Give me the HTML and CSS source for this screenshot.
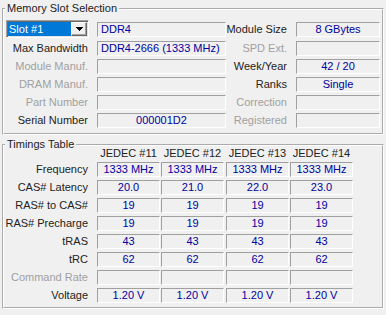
FILE: index.html
```html
<!DOCTYPE html>
<html>
<head>
    <meta charset="UTF-8">
    <title>SPD</title>
    <link rel="stylesheet" href="styles.css">
</head>
<body>
    <div class="window">
        <fieldset class="group slot">
            <legend>Memory Slot Selection</legend>
            <div class="slot-grid">
                <div class="combo">
                    <span class="combo-value">Slot #1</span>
                    <span class="combo-btn">
                        <svg width="7" height="4" viewBox="0 0 7 4"><path d="M0 0h7v1h-1v1h-1v1h-1v1h-1v-1h-1v-1h-1v-1h-1z" fill="#000"/></svg>
                    </span>
                </div>
                <div class="field">DDR4</div>
                <div class="label">Module Size</div>
                <div class="field center">8 GBytes</div>

                <div class="label">Max Bandwidth</div>
                <div class="field">DDR4-2666 (1333 MHz)</div>
                <div class="label off">SPD Ext.</div>
                <div class="field"></div>

                <div class="label off">Module Manuf.</div>
                <div class="field"></div>
                <div class="label">Week/Year</div>
                <div class="field center">42 / 20</div>

                <div class="label off">DRAM Manuf.</div>
                <div class="field"></div>
                <div class="label">Ranks</div>
                <div class="field center">Single</div>

                <div class="label off">Part Number</div>
                <div class="field"></div>
                <div class="label off">Correction</div>
                <div class="field"></div>

                <div class="label">Serial Number</div>
                <div class="field center">000001D2</div>
                <div class="label off">Registered</div>
                <div class="field"></div>
            </div>
        </fieldset>

        <fieldset class="group timings">
            <legend>Timings Table</legend>
            <div class="timing-grid">
                <div></div>
                <div class="head">JEDEC #11</div>
                <div class="head">JEDEC #12</div>
                <div class="head">JEDEC #13</div>
                <div class="head">JEDEC #14</div>

                <div class="label">Frequency</div>
                <div class="field center">1333 MHz</div>
                <div class="field center">1333 MHz</div>
                <div class="field center">1333 MHz</div>
                <div class="field center">1333 MHz</div>

                <div class="label">CAS# Latency</div>
                <div class="field center">20.0</div>
                <div class="field center">21.0</div>
                <div class="field center">22.0</div>
                <div class="field center">23.0</div>

                <div class="label">RAS# to CAS#</div>
                <div class="field center">19</div>
                <div class="field center">19</div>
                <div class="field center">19</div>
                <div class="field center">19</div>

                <div class="label">RAS# Precharge</div>
                <div class="field center">19</div>
                <div class="field center">19</div>
                <div class="field center">19</div>
                <div class="field center">19</div>

                <div class="label">tRAS</div>
                <div class="field center">43</div>
                <div class="field center">43</div>
                <div class="field center">43</div>
                <div class="field center">43</div>

                <div class="label">tRC</div>
                <div class="field center">62</div>
                <div class="field center">62</div>
                <div class="field center">62</div>
                <div class="field center">62</div>

                <div class="label off">Command Rate</div>
                <div class="field"></div>
                <div class="field"></div>
                <div class="field"></div>
                <div class="field"></div>

                <div class="label">Voltage</div>
                <div class="field center">1.20 V</div>
                <div class="field center">1.20 V</div>
                <div class="field center">1.20 V</div>
                <div class="field center">1.20 V</div>
            </div>
        </fieldset>
    </div>
</body>
</html>
```

FILE: styles.css
```css
/* CPU-Z style SPD tab */
body {
    margin: 0;
    background-color: #f0f0f0;
    font-family: "Liberation Sans", Arial, sans-serif;
    font-size: 11px;
    color: #222222;
}
.window {
    padding: 0 2px 0 2px;
}
.group {
    margin: 2px 0 0 0;
    padding: 7px 0 5px 0;
    border: 2px groove #ffffff;
    min-width: 0;
}
.group legend {
    margin-left: 1px;
    padding: 0 2px;
    line-height: 13px;
}
.timings {
    margin-top: 3px;
    padding: 0 0 4px 0;
}
.slot-grid {
    display: grid;
    grid-template-columns: 93px 129px 70px 84px;
    grid-template-rows: 16px repeat(5, 15px);
    row-gap: 3px;
}
.timing-grid {
    display: grid;
    grid-template-columns: 93px 64px 65px 64px 63px;
    grid-template-rows: 12px repeat(8, 15px);
    row-gap: 3px;
    margin-top: -4px;
}
.label {
    padding: 1px 9px 1px 0;
    line-height: 13px;
    text-align: right;
    white-space: nowrap;
}
.label.off {
    color: #a0a0a0;
}
.field {
    box-sizing: border-box;
    height: 15px;
    padding: 0 3px;
    line-height: 13px;
    border: 1px solid;
    border-color: #a0a0a0 #ffffff #ffffff #a0a0a0;
    color: #0000a0;
    white-space: nowrap;
    overflow: hidden;
}
.timing-grid .field {
    width: 63px;
}
.center {
    text-align: center;
}
.head {
    width: 63px;
    line-height: 12px;
    text-align: center;
    white-space: nowrap;
}
.combo {
    box-sizing: border-box;
    justify-self: end;
    width: 83px;
    height: 18px;
    margin: -2px 8px 0 0;
    display: flex;
    border: 1px solid;
    border-color: #a0a0a0 #ffffff #ffffff #a0a0a0;
    box-shadow: inset 1px 1px #696969, inset -1px -1px #e3e3e3;
    padding: 1px;
    background-color: #ffffff;
}
.combo-value {
    width: 63px;
    padding-left: 1px;
    box-sizing: border-box;
    background-color: #0078d7;
    color: #ffffff;
    line-height: 14px;
}
.combo-btn {
    box-sizing: border-box;
    width: 16px;
    height: 14px;
    display: flex;
    align-items: center;
    justify-content: center;
    background-color: #f0f0f0;
    border: 1px solid;
    border-color: #ffffff #696969 #696969 #ffffff;
    box-shadow: inset -1px -1px #a0a0a0;
}
```
